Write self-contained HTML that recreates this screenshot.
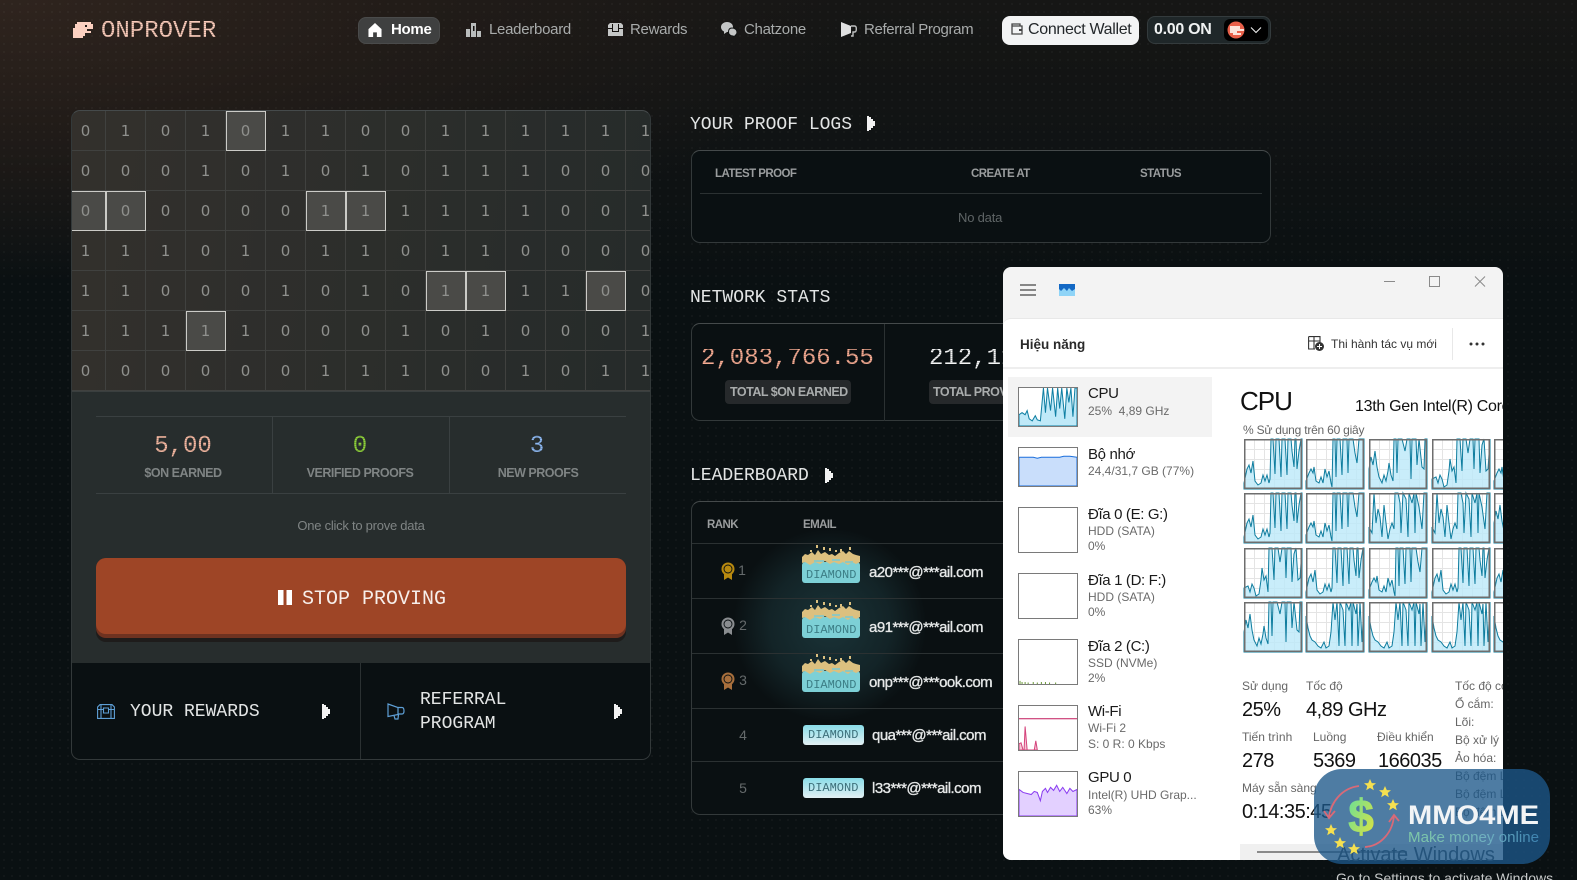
<!DOCTYPE html>
<html lang="vi"><head><meta charset="utf-8"><title>OnProver</title>
<style>
*{box-sizing:border-box}
html,body{margin:0;padding:0;width:1577px;height:880px;overflow:hidden;background:#0a1012}
body{position:relative;font-family:"Liberation Sans",sans-serif;color:#fff}
.bg{position:absolute;inset:0;background:radial-gradient(ellipse 850px 280px at 0 0,#2f241e 0,rgba(40,31,26,.7) 45%,rgba(10,16,18,0) 100%),linear-gradient(180deg,#161615 0,#0a1012 290px)}
.dots{position:absolute;inset:0;background-image:radial-gradient(circle,rgba(255,255,255,.04) .8px,transparent 1px);background-size:8px 8px}
.t{position:absolute;white-space:nowrap;line-height:20px;height:20px}
.m{font-family:"Liberation Mono",monospace}
.nav{font-size:15px;color:#a8abab;letter-spacing:-.28px}
.ic{position:absolute}
.panel{position:absolute;border:1px solid #33393a;border-top-color:#454a4b;border-radius:9px;background:#0a1012;overflow:hidden}
.h{font-weight:700;font-size:11.5px;color:#9a9d9e;letter-spacing:-.55px}
.grid{position:absolute;left:-6px;top:0;display:grid;grid-template-columns:repeat(15,40px);grid-auto-rows:40px;font-family:"DejaVu Sans",sans-serif;font-size:15px;color:#8f908d}
.grid i{font-style:normal;display:flex;align-items:center;justify-content:center;border-right:1.5px solid #40413f;border-bottom:1.5px solid #40413f}
.grid i.o{background:#4a4a47;outline:1.5px solid #cbcbc7;outline-offset:-1.5px}
.lbl{font-weight:700;font-size:12.5px;color:#7f8484;letter-spacing:-.48px;transform:translateX(-50%)}
.num{font-size:24px;line-height:24px;height:24px;transform:translateX(-50%)}
.dot{-webkit-text-fill-color:transparent;-webkit-background-clip:text;background-clip:text;background-size:2px 2px}
.mail{font-size:15px;letter-spacing:-.52px;color:#e6e8e8;-webkit-text-stroke:.35px #e6e8e8}
.rk{font-size:14px;color:#656a6b;transform:translateX(-50%)}
.ln{position:absolute;height:1px;background:#2b3132}
.win{position:absolute;left:1003px;top:267px;width:500px;height:593px;background:#f3f3f3;border-radius:8px 8px 0 8px;overflow:hidden;color:#111}
.in{position:absolute;left:-1003px;top:-267px;width:1577px;height:880px}
.wt{font-size:15px;color:#1a1a1a;letter-spacing:-.35px}
.ws{font-size:12px;color:#6a6a6a}
.th{position:absolute;border:1.5px solid #7a7a7a;background:#fff;width:60px;overflow:hidden}
.sl{font-size:12px;color:#666}
.sv{font-size:20px;color:#111;letter-spacing:-.5px}
.dg{font-size:12px;letter-spacing:0}
</style></head><body>
<div class="bg"></div><div class="dots"></div>

<!-- Logo -->
<svg class="ic" style="left:73px;top:22px" width="20" height="16" viewBox="0 0 20 16" shape-rendering="crispEdges"><path fill="#fbd0c0" d="M4 0H18V2H20V7H14V9H18V11H12V14H10V16H0V6H2V2H4Z"/><rect x="12" y="3" width="2" height="2" fill="#241c18"/></svg>
<div class="t m dot" style="left:101px;top:21px;font-size:24px;height:22px;line-height:22px;background-image:linear-gradient(#fbcdbc 70%,#a9877a 70%)">ONPROVER</div>

<!-- Nav -->
<div style="position:absolute;left:358px;top:17px;width:82px;height:27px;background:#3f4040;border:1px solid #4a4b4b;border-radius:8px"></div>
<svg class="ic" style="left:368px;top:23px" width="14" height="14" viewBox="0 0 14 15"><path fill="#fff" d="M7 0 14 6.5V15H9V10H5V15H0V6.5Z"/></svg>
<div class="t nav" style="left:391px;top:20px;color:#fff;font-weight:700">Home</div>
<svg class="ic" style="left:466px;top:22px" width="15" height="15" viewBox="0 0 15 15"><path fill="#b9bcbc" d="M5 1H10V15H5ZM0 7H4V15H0ZM11 9H15V15H11Z"/><rect x="7" y="4" width="1.5" height="5" fill="#14110f"/></svg>
<div class="t nav" style="left:489px;top:20px">Leaderboard</div>
<svg class="ic" style="left:608px;top:23px" width="15" height="13" viewBox="0 0 15 13"><path fill="#c4c6c6" d="M2 0H13L15 2V13H0V2Z"/><path fill="#14110f" d="M0 5H5V8H10V5H15V6H11V9H4V6H0ZM4 1H5V5H4ZM10 1H11V5H10Z"/></svg>
<div class="t nav" style="left:630px;top:20px">Rewards</div>
<svg class="ic" style="left:721px;top:22px" width="16" height="15" viewBox="0 0 16 15"><path fill="#c4c6c6" d="M6 0C9.500 0 12 2.200 12 5S9.500 10 6 10L3 12V9.500C1.200 8.600 0 7 0 5 0 2.200 2.700 0 6 0Z"/><path fill="#c4c6c6" stroke="#0f1212" d="M11 6C14 6 16 8 16 10S15 13 14 13.500V15L12 14C9.500 14 7.500 12.500 7.500 10S8.500 6 11 6Z"/></svg>
<div class="t nav" style="left:744px;top:20px">Chatzone</div>
<svg class="ic" style="left:841px;top:22px" width="16" height="15" viewBox="0 0 16 15"><path fill="#dfe0e0" d="M0 0 10 4V11L0 15Z"/><path fill="none" stroke="#bfc1c1" stroke-width="1.400" d="M10 4H13.500C15 4 15.300 5 15.300 7S15 10 13.500 10H12V14H10"/></svg>
<div class="t nav" style="left:864px;top:20px;letter-spacing:-.36px">Referral Program</div>
<div style="position:absolute;left:1002px;top:16px;width:137px;height:29px;background:#f2f3f4;border-radius:8px"></div>
<svg class="ic" style="left:1011px;top:23px" width="12" height="12" viewBox="0 0 12 12"><path fill="none" stroke="#444" stroke-width="1.300" d="M1 3H11V11H1ZM1 3V1H9V3"/><path fill="#444" d="M8 6H11V8H8Z"/></svg>
<div class="t" style="left:1028px;top:20px;font-size:16px;color:#23272a;letter-spacing:-.32px">Connect Wallet</div>
<div style="position:absolute;left:1147px;top:16px;width:124px;height:28px;background:#1f2729;border:1px solid #343b3d;border-radius:8px"></div>
<div class="t" style="left:1154px;top:20px;font-size:16px;color:#f0f2f2;font-weight:700;letter-spacing:-.3px">0.00 ON</div>
<div style="position:absolute;left:1224px;top:19px;width:44px;height:22px;background:#000;border-radius:6px"></div>
<svg class="ic" style="left:1227px;top:21px" width="18" height="18" viewBox="0 0 18 18"><circle cx="9" cy="9" r="8.500" fill="#e8604a"/><path fill="#fbe4dc" d="M3 5H13V8H17V10H10V12H14V14H6V12H3Z"/></svg>
<svg class="ic" style="left:1250px;top:26px" width="12" height="8" viewBox="0 0 12 8"><path fill="none" stroke="#eee" stroke-width="1.100" d="M1 1.500 6 6.500 11 1.500"/></svg>

<!-- Left panel -->
<div class="panel" style="left:71px;top:110px;width:580px;height:650px;background:linear-gradient(100deg,#33302c 0,#2a2d2b 60%,#242a2a 100%)">
 <div class="grid">
<i>0</i><i>1</i><i>0</i><i>1</i><i class="o">0</i><i>1</i><i>1</i><i>0</i><i>0</i><i>1</i><i>1</i><i>1</i><i>1</i><i>1</i><i>1</i>
<i>0</i><i>0</i><i>0</i><i>1</i><i>0</i><i>1</i><i>0</i><i>1</i><i>0</i><i>1</i><i>1</i><i>1</i><i>0</i><i>0</i><i>0</i>
<i class="o">0</i><i class="o">0</i><i>0</i><i>0</i><i>0</i><i>0</i><i class="o">1</i><i class="o">1</i><i>1</i><i>1</i><i>1</i><i>1</i><i>0</i><i>0</i><i>1</i>
<i>1</i><i>1</i><i>1</i><i>0</i><i>1</i><i>0</i><i>1</i><i>1</i><i>0</i><i>1</i><i>1</i><i>0</i><i>0</i><i>0</i><i>0</i>
<i>1</i><i>1</i><i>0</i><i>0</i><i>0</i><i>1</i><i>0</i><i>1</i><i>0</i><i class="o">1</i><i class="o">1</i><i>1</i><i>1</i><i class="o">0</i><i>0</i>
<i>1</i><i>1</i><i>1</i><i class="o">1</i><i>1</i><i>0</i><i>0</i><i>0</i><i>1</i><i>0</i><i>1</i><i>0</i><i>0</i><i>0</i><i>1</i>
<i>0</i><i>0</i><i>0</i><i>0</i><i>0</i><i>0</i><i>1</i><i>1</i><i>1</i><i>0</i><i>0</i><i>1</i><i>0</i><i>1</i><i>1</i>
 </div>
 <div style="position:absolute;left:0;top:280px;width:580px;height:272px;background:#272d2d;border-top:1px solid #3a3f3f"></div>
 <div style="position:absolute;left:0;top:552px;width:580px;height:98px;background:#0a1012"></div>
</div>
<div class="ln" style="left:96px;top:416px;width:530px;background:#3a4041"></div>
<div class="ln" style="left:96px;top:493px;width:530px;background:#3a4041"></div>
<div class="ln" style="left:272px;top:417px;width:1px;height:76px;background:#3a4041"></div>
<div class="ln" style="left:449px;top:417px;width:1px;height:76px;background:#3a4041"></div>
<div class="t m num dot" style="left:183px;top:435px;background-image:linear-gradient(#f4b8a2 70%,#a97f6f 70%)">5,00</div>
<div class="t m num dot" style="left:360px;top:435px;background-image:linear-gradient(#8fd13a 70%,#5f8a2d 70%)">0</div>
<div class="t m num dot" style="left:537px;top:435px;background-image:linear-gradient(#8fb9f2 70%,#5f80a8 70%)">3</div>
<div class="t lbl" style="left:183px;top:463px">$ON EARNED</div>
<div class="t lbl" style="left:360px;top:463px">VERIFIED PROOFS</div>
<div class="t lbl" style="left:538px;top:463px">NEW PROOFS</div>
<div class="t" style="left:361px;top:516px;transform:translateX(-50%);font-size:13px;color:#7f8484;letter-spacing:-.25px">One click to prove data</div>
<div style="position:absolute;left:96px;top:558px;width:530px;height:84px;background:#1e1c1b;border-radius:10px"></div>
<div style="position:absolute;left:96px;top:558px;width:530px;height:80px;background:#6e3220;border-radius:10px"></div>
<div style="position:absolute;left:96px;top:558px;width:530px;height:76px;background:#9e4526;border-radius:10px"></div>
<svg class="ic" style="left:278px;top:590px" width="14" height="15"><rect width="5.500" height="15" fill="#fff"/><rect x="8.500" width="5.500" height="15" fill="#fff"/></svg>
<div class="t m" style="left:302px;top:590px;font-size:20px;color:#f6eeea">STOP PROVING</div>
<div class="ln" style="left:360px;top:663px;width:1px;height:96px;background:#2b3132"></div>
<svg class="ic" style="left:97px;top:704px" width="18" height="15" viewBox="0 0 18 15"><path fill="none" stroke="#5e9fd6" stroke-width="1.100" d="M3 .600H15L17.400 3V14.400H.600V3ZM.600 5.500H6.500M11.500 5.500H17.400M4 .600V14.400M14 .600V14.400M6.500 4H11.500V9H6.500Z"/></svg>
<div class="t m" style="left:130px;top:702px;font-size:18px;color:#e3e5e5">YOUR REWARDS</div>
<svg class="ic" style="left:322px;top:704px" width="8" height="15"><path fill="#f2f2f2" d="M0 0H2V1H4V3H6V5H8V10H6V12H4V14H2V15H0Z"/></svg>
<svg class="ic" style="left:387px;top:703px" width="18" height="17" viewBox="0 0 18 17"><path fill="none" stroke="#5e9fd6" stroke-width="1.200" d="M1 1 11 4.500V11.500L1 13.500ZM11 4.500H15C16.500 4.500 17 6 17 8S16.500 11 15 11H11M7 12.500 8 16H11L11.500 11.500"/></svg>
<div class="t m" style="left:420px;top:690px;font-size:18px;color:#e3e5e5">REFERRAL</div>
<div class="t m" style="left:420px;top:714px;font-size:18px;color:#e3e5e5">PROGRAM</div>
<svg class="ic" style="left:614px;top:704px" width="8" height="15"><path fill="#f2f2f2" d="M0 0H2V1H4V3H6V5H8V10H6V12H4V14H2V15H0Z"/></svg>

<!-- Proof logs -->
<div class="t m" style="left:690px;top:115px;font-size:18px;color:#e3e5e5">YOUR PROOF LOGS</div>
<svg class="ic" style="left:867px;top:116px" width="8" height="15"><path fill="#f2f2f2" d="M0 0H2V1H4V3H6V5H8V10H6V12H4V14H2V15H0Z"/></svg>
<div class="panel" style="left:691px;top:150px;width:580px;height:93px"></div>
<div class="t h" style="left:715px;top:164px">LATEST PROOF</div>
<div class="t h" style="left:971px;top:164px">CREATE AT</div>
<div class="t h" style="left:1140px;top:164px">STATUS</div>
<div class="ln" style="left:700px;top:193px;width:562px"></div>
<div class="t" style="left:958px;top:208px;font-size:13px;color:#5f6566;letter-spacing:-.2px">No data</div>

<!-- Network -->
<div class="t m" style="left:690px;top:288px;font-size:18px;color:#e3e5e5">NETWORK STATS</div>
<div class="panel" style="left:691px;top:323px;width:580px;height:98px"></div>
<div class="ln" style="left:884px;top:324px;width:1px;height:97px"></div>
<div class="t m dot" style="left:701px;top:349px;font-size:24px;background-image:linear-gradient(#f6ab92 70%,#a37565 70%)">2,083,766.55</div>
<div style="position:absolute;left:725px;top:380px;width:126px;height:24px;background:#26292b;border-radius:4px"></div>
<div class="t" style="left:730px;top:382px;font-size:12.5px;font-weight:700;color:#a9acac;letter-spacing:-.5px">TOTAL $ON EARNED</div>
<div class="t m dot" style="left:929px;top:349px;font-size:24px;background-image:linear-gradient(#f4f5f5 70%,#a0a3a3 70%)">212,111</div>
<div style="position:absolute;left:929px;top:380px;width:140px;height:24px;background:#26292b;border-radius:4px"></div>
<div class="t" style="left:933px;top:382px;font-size:12.5px;font-weight:700;color:#a9acac;letter-spacing:-.5px">TOTAL PROV</div>

<!-- Leaderboard -->
<div class="t m" style="left:690px;top:466px;font-size:18px;color:#e3e5e5">LEADERBOARD</div>
<svg class="ic" style="left:825px;top:468px" width="8" height="15"><path fill="#f2f2f2" d="M0 0H2V1H4V3H6V5H8V10H6V12H4V14H2V15H0Z"/></svg>
<div class="panel" style="left:691px;top:501px;width:580px;height:314px"></div>
<div style="position:absolute;left:735px;top:530px;width:190px;height:190px;background:radial-gradient(ellipse at center,rgba(60,125,135,.32) 0,rgba(60,125,135,.18) 45%,rgba(60,125,135,0) 72%)"></div>
<div class="t h" style="left:707px;top:515px">RANK</div>
<div class="t h" style="left:803px;top:515px">EMAIL</div>
<div class="ln" style="left:692px;top:543px;width:578px"></div>
<div class="ln" style="left:692px;top:598px;width:578px"></div>
<div class="ln" style="left:692px;top:653px;width:578px"></div>
<div class="ln" style="left:692px;top:708px;width:578px"></div>
<div class="ln" style="left:692px;top:761px;width:578px"></div>

<svg width="0" height="0" style="position:absolute"><defs>
<g id="flame"><rect y="17" width="58" height="21" rx="3" fill="#7dd0d6"/><path fill="#dcc07f" d="M0 12 3 9 6 10 10 7 13 10 16 5 19 9 23 7 27 10 30 9 33 11 37 8 41 6 44 9 47 6 51 9 54 10 58 11V17L54 19 50 17 46 20 41 17 37 19 32 17 28 19 23 16 18 19 13 17 8 20 3 17 0 18Z"/><path fill="#dcc07f" d="M14 0h2v3h-2zM21 2h2v3h-2zM27 3h2v3h-2zM38 4h2v3h-2zM47 2h2v3h-2zM8 5h2v2H8zM33 5h2v2h-2z"/><path fill="#8fc7c0" d="M12 15h10v2H12zM30 14h8v2h-8zM43 16h8v2h-8z"/></g>
<g id="medal"><path d="M3 11V18L7 15.500 11 18V11Z"/><circle cx="7" cy="7" r="6.500"/><circle cx="7" cy="7" r="4" fill="none" stroke="#0a1012" stroke-width=".9"/></g>
</defs></svg>

<svg class="ic" style="left:721px;top:562px" width="14" height="18" fill="#b8890f"><use href="#medal"/></svg>
<svg class="ic" style="left:721px;top:617px" width="14" height="18" fill="#8a8d90"><use href="#medal"/></svg>
<svg class="ic" style="left:721px;top:672px" width="14" height="18" fill="#a86f3c"><use href="#medal"/></svg>
<div class="t rk" style="left:742px;top:560px">1</div>
<div class="t rk" style="left:743px;top:615px">2</div>
<div class="t rk" style="left:743px;top:670px">3</div>
<div class="t rk" style="left:743px;top:725px">4</div>
<div class="t rk" style="left:743px;top:778px">5</div>

<svg class="ic" style="left:802px;top:545px" width="58" height="38"><use href="#flame"/></svg>
<svg class="ic" style="left:802px;top:600px" width="58" height="38"><use href="#flame"/></svg>
<svg class="ic" style="left:802px;top:654px" width="58" height="38"><use href="#flame"/></svg>
<div class="t m dg" style="left:806px;top:565px;color:#3c7d85">DIAMOND</div>
<div class="t m dg" style="left:806px;top:620px;color:#3c7d85">DIAMOND</div>
<div class="t m dg" style="left:806px;top:675px;color:#3c7d85">DIAMOND</div>
<div class="t mail" style="left:869px;top:563px">a20***@***ail.com</div>
<div class="t mail" style="left:869px;top:618px">a91***@***ail.com</div>
<div class="t mail" style="left:869px;top:673px">onp***@***ook.com</div>

<div style="position:absolute;left:803px;top:725px;width:61px;height:20px;border-radius:3px;background:linear-gradient(180deg,#8adde8,#e2eff3)"></div>
<div class="t m dg" style="left:808px;top:725px;color:#3d6f7a">DIAMOND</div>
<div class="t mail" style="left:872px;top:726px">qua***@***ail.com</div>
<div style="position:absolute;left:803px;top:778px;width:61px;height:20px;border-radius:3px;background:linear-gradient(180deg,#8adde8,#e2eff3)"></div>
<div class="t m dg" style="left:808px;top:778px;color:#3d6f7a">DIAMOND</div>
<div class="t mail" style="left:872px;top:779px">l33***@***ail.com</div>

<!-- Task manager -->
<div class="win"><div class="in">
 <svg class="ic" style="left:1020px;top:284px" width="16" height="12"><path stroke="#444" stroke-width="1.200" d="M0 1H16M0 6H16M0 11H16"/></svg>
 <svg class="ic" style="left:1059px;top:284px" width="16" height="12"><rect width="16" height="12" fill="#8fd4f7"/><path fill="#1368c4" d="M0 0H16V5L13 7 10 4 8 7 5 4 2 7 0 5Z"/></svg>
 <svg class="ic" style="left:1384px;top:276px" width="102" height="12"><path stroke="#8a8a8a" fill="none" d="M0 5.500H11M45.500 .500H55.500V10.500H45.500ZM91 .500 101 10.500M101 .500 91 10.500"/></svg>
 <div style="position:absolute;left:1003px;top:318px;width:500px;height:542px;background:#fff;border-radius:8px 0 0 8px;border-top:1px solid #e8e8e8"></div>
 <div style="position:absolute;left:1003px;top:367px;width:500px;height:2px;background:#eeeeee"></div>
 <div class="t" style="left:1020px;top:335px;font-size:13.500px;font-weight:700;color:#2a2a2a">Hiệu năng</div>
 <svg class="ic" style="left:1308px;top:336px" width="16" height="15" viewBox="0 0 16 15"><path fill="none" stroke="#333" stroke-width="1.100" d="M.600.600H12V7M.600.600V13H7M.600 5H12M6 .600V13"/><circle cx="11.500" cy="10.500" r="4.500" fill="#333"/><path stroke="#fff" stroke-width="1" d="M9 10.500H14M11.500 8V13"/></svg>
 <div class="t" style="left:1331px;top:334px;font-size:12px;color:#333">Thi hành tác vụ mới</div>
 <div style="position:absolute;left:1452px;top:328px;width:1px;height:32px;background:#e8e8e8"></div>
 <svg class="ic" style="left:1469px;top:342px" width="16" height="4" fill="#333"><circle cx="2" cy="2" r="1.500"/><circle cx="8" cy="2" r="1.500"/><circle cx="14" cy="2" r="1.500"/></svg>

 <div style="position:absolute;left:1008px;top:377px;width:204px;height:60px;background:#f3f3f3"></div>
 <svg class="th" style="left:1018px;top:387px;height:40px" viewBox="0 0 57 37" preserveAspectRatio="none"><path fill="#bfe9f8" stroke="#0f7fa3" d="M0 37V26L3 24 6 26 8 22 10 30 13 32 16 27 18 31 21 32 24 0 26 24 28 0 31 22 33 0 36 28 38 0 40 20 42 0 45 30 47 0 49 14 51 0 53 28 55 0 57 0V37Z"/></svg>
 <div class="t wt" style="left:1088px;top:384px">CPU</div>
 <div class="t ws" style="left:1088px;top:401px">25%&nbsp; 4,89 GHz</div>

 <svg class="th" style="left:1018px;top:447px;height:40px" viewBox="0 0 57 37" preserveAspectRatio="none"><path fill="#c9defb" stroke="#1a6fdc" d="M0 37V9L10 9 14 9 18 10 22 9 40 9 44 8 50 8 57 9V37Z"/></svg>
 <div class="t wt" style="left:1088px;top:445px">Bộ nhớ</div>
 <div class="t ws" style="left:1088px;top:461px">24,4/31,7 GB (77%)</div>

 <div class="th" style="left:1018px;top:507px;height:46px"></div>
 <div class="t wt" style="left:1088px;top:505px">Đĩa 0 (E: G:)</div>
 <div class="t ws" style="left:1088px;top:521px">HDD (SATA)</div>
 <div class="t ws" style="left:1088px;top:536px">0%</div>

 <div class="th" style="left:1018px;top:573px;height:46px"></div>
 <div class="t wt" style="left:1088px;top:571px">Đĩa 1 (D: F:)</div>
 <div class="t ws" style="left:1088px;top:587px">HDD (SATA)</div>
 <div class="t ws" style="left:1088px;top:602px">0%</div>

 <svg class="th" style="left:1018px;top:639px;height:46px" viewBox="0 0 57 43" preserveAspectRatio="none"><path stroke="#6d9a3a" fill="none" d="M1 43V40M3 43V41M6 43V41M9 43V41.500M14 43V41M18 43V41.500M22 43V41M26 43V41M30 43V41.500M36 43V41.500"/></svg>
 <div class="t wt" style="left:1088px;top:637px">Đĩa 2 (C:)</div>
 <div class="t ws" style="left:1088px;top:653px">SSD (NVMe)</div>
 <div class="t ws" style="left:1088px;top:668px">2%</div>

 <svg class="th" style="left:1018px;top:705px;height:46px" viewBox="0 0 57 43" preserveAspectRatio="none"><path stroke="#c2185b" fill="none" d="M0 12.500H57"/><path fill="#f5c6d6" stroke="#d5447c" d="M0 43V37L2 36 4 43 5 43 6 20 8 43 15 43 16.500 34 18 43Z"/></svg>
 <div class="t wt" style="left:1088px;top:702px">Wi-Fi</div>
 <div class="t ws" style="left:1088px;top:718px">Wi-Fi 2</div>
 <div class="t ws" style="left:1088px;top:734px">S: 0 R: 0 Kbps</div>

 <svg class="th" style="left:1018px;top:771px;height:46px" viewBox="0 0 57 43" preserveAspectRatio="none"><path fill="#e3d0ff" stroke="#8a3df0" d="M0 43V17L4 20 8 21 12 22 15 19 18 20 21 28 23 19 26 16 28 20 31 15 34 18 37 13 40 19 43 15 47 21 50 16 53 19 57 17V43Z"/></svg>
 <div class="t wt" style="left:1088px;top:768px">GPU 0</div>
 <div class="t ws" style="left:1088px;top:785px">Intel(R) UHD Grap...</div>
 <div class="t ws" style="left:1088px;top:800px">63%</div>

 <div class="t" style="left:1240px;top:386px;font-size:26px;letter-spacing:-1px;height:30px;line-height:30px;color:#111">CPU</div>
 <div class="t" style="left:1355px;top:397px;font-size:16px;color:#111;letter-spacing:-.3px">13th Gen Intel(R) Core</div>
 <div class="t sl" style="left:1243px;top:420px;letter-spacing:-.22px">% Sử dụng trên 60 giây</div>

 <svg class="ic" style="left:1240px;top:435px" width="263" height="222">
  <defs>
   <g id="gr"><rect width="58" height="50" fill="#fff"/><path stroke="#e4e4e4" fill="none" d="M10.500 0V50M20.500 0V50M30.500 0V50M40.500 0V50M50.500 0V50M0 10.500H58M0 20.500H58M0 30.500H58M0 40.500H58"/></g>
   <g id="a"><use href="#gr"/><path fill="#bde9f9" fill-opacity=".82" stroke="#0d7c9e" stroke-width="1" d="M0 50V44L3 30 5 26 7 34 9 22 11 42 14 46 17 44 19 36 21 42 23 36 25 44 26 40 27 0 29 0 31 35 32 0 35 0 37 38 38 0 41 0 43 36 44 0 47 0 48 12 50 28 51 0 52 0 53 30 55 12 57 0 58 0V50Z"/><rect x=".75" y=".75" width="56.500" height="48.500" fill="none" stroke="#6e6e6e" stroke-width="1.500"/></g>
   <g id="b"><use href="#gr"/><path fill="#bde9f9" fill-opacity=".82" stroke="#0d7c9e" stroke-width="1" d="M0 50V42L3 34 5 30 7 34 8 28 10 42 13 44 15 38 17 44 19 30 21 38 23 32 25 44 26 48 27 0 29 0 30 38 31 0 34 0 36 36 37 0 41 0 42 34 43 0 47 0 49 14 51 24 53 0 58 0V50Z"/><rect x=".75" y=".75" width="56.500" height="48.500" fill="none" stroke="#6e6e6e" stroke-width="1.500"/></g>
   <g id="c"><use href="#gr"/><path fill="#bde9f9" fill-opacity=".82" stroke="#0d7c9e" stroke-width="1" d="M0 50V30L2 18 4 26 6 12 8 28 10 38 13 44 15 36 17 42 19 32 20 24 22 36 24 42 25 0 27 0 28 34 29 0 33 0 36 12 38 0 41 0 42 40 43 0 47 0 48 26 50 0 53 28 55 30 56 0 58 0V50Z"/><rect x=".75" y=".75" width="56.500" height="48.500" fill="none" stroke="#6e6e6e" stroke-width="1.500"/></g>
   <g id="d"><use href="#gr"/><path fill="#bde9f9" fill-opacity=".82" stroke="#0d7c9e" stroke-width="1" d="M0 50V40L4 38 6 44 8 36 10 40 12 48 15 46 17 32 18 20 20 32 22 28 24 44 25 0 28 0 30 32 31 0 34 0 36 14 38 0 41 0 42 30 43 0 47 0 48 34 50 6 52 0 54 32 56 30 58 0V50Z"/><rect x=".75" y=".75" width="56.500" height="48.500" fill="none" stroke="#6e6e6e" stroke-width="1.500"/></g>
   <g id="e"><use href="#gr"/><path fill="#bde9f9" fill-opacity=".82" stroke="#0d7c9e" stroke-width="1" d="M0 50V34L3 40 5 0 7 30 9 16 11 24 13 44 15 12 17 30 19 46 21 36 23 30 25 36 26 0 29 0 31 10 32 40 34 0 37 6 39 44 40 0 43 10 45 0 46 40 47 0 50 14 53 36 55 0 58 0V50Z"/><rect x=".75" y=".75" width="56.500" height="48.500" fill="none" stroke="#6e6e6e" stroke-width="1.500"/></g>
   <g id="f"><use href="#gr"/><path fill="#bde9f9" fill-opacity=".82" stroke="#0d7c9e" stroke-width="1" d="M0 50V14L2 26 4 34 6 38 9 40 12 44 15 46 18 40 20 46 23 44 25 30 27 0 29 18 31 0 33 44 34 0 37 8 39 44 40 0 43 8 45 0 46 44 47 0 50 12 51 2 52 44 54 0 56 40 58 0V50Z"/><rect x=".75" y=".75" width="56.500" height="48.500" fill="none" stroke="#6e6e6e" stroke-width="1.500"/></g>
  </defs>
  <use href="#a" x="4" y="4"/><use href="#b" x="66" y="4"/><use href="#c" x="129" y="4"/><use href="#d" x="192" y="4"/><use href="#b" x="254" y="4"/>
  <use href="#a" x="4" y="58"/><use href="#b" x="66" y="58"/><use href="#e" x="129" y="58"/><use href="#e" x="192" y="58"/><use href="#c" x="254" y="58"/>
  <use href="#d" x="4" y="113"/><use href="#a" x="66" y="113"/><use href="#b" x="129" y="113"/><use href="#a" x="192" y="113"/><use href="#a" x="254" y="113"/>
  <use href="#c" x="4" y="167"/><use href="#f" x="66" y="167"/><use href="#f" x="129" y="167"/><use href="#f" x="192" y="167"/><use href="#f" x="254" y="167"/>
 </svg>

 <div class="t sl" style="left:1242px;top:676px">Sử dụng</div>
 <div class="t sl" style="left:1306px;top:676px">Tốc độ</div>
 <div class="t sv" style="left:1242px;top:700px">25%</div>
 <div class="t sv" style="left:1306px;top:700px">4,89 GHz</div>
 <div class="t sl" style="left:1242px;top:727px">Tiến trình</div>
 <div class="t sl" style="left:1313px;top:727px">Luồng</div>
 <div class="t sl" style="left:1377px;top:727px">Điều khiển</div>
 <div class="t sv" style="left:1242px;top:751px">278</div>
 <div class="t sv" style="left:1313px;top:751px">5369</div>
 <div class="t sv" style="left:1378px;top:751px">166035</div>
 <div class="t sl" style="left:1242px;top:778px">Máy sẵn sàng</div>
 <div class="t sv" style="left:1242px;top:802px">0:14:35:45</div>
 <div class="t sl" style="left:1455px;top:676px">Tốc độ cơ</div>
 <div class="t sl" style="left:1455px;top:694px">Ổ cắm:</div>
 <div class="t sl" style="left:1455px;top:712px">Lõi:</div>
 <div class="t sl" style="left:1455px;top:730px">Bộ xử lý lô</div>
 <div class="t sl" style="left:1455px;top:748px">Ảo hóa:</div>
 <div class="t sl" style="left:1455px;top:766px">Bộ đệm L1</div>
 <div class="t sl" style="left:1455px;top:784px">Bộ đệm L2</div>
 <div class="t sl" style="left:1455px;top:802px">Bộ đệm L3</div>
 <div style="position:absolute;left:1240px;top:844px;width:263px;height:16px;background:#f0f0f0"></div>
 <div style="position:absolute;left:1257px;top:851px;width:150px;height:2px;background:#8a8a8a"></div>
</div></div>

<!-- Activate Windows -->
<div class="t" style="left:1337px;top:845px;font-size:20px;color:#3f474a">Activate Windows</div>
<div class="t" style="left:1336px;top:868px;font-size:14px;color:#c6c8c8">Go to Settings to activate Windows.</div>

<!-- Watermark -->
<div style="position:absolute;left:1314px;top:769px;width:236px;height:95px;border-radius:28px;background:rgba(28,87,137,.78)"></div>
<svg class="ic" style="left:1314px;top:769px" width="236" height="95" viewBox="1314 769 236 95">
 <defs><linearGradient id="dg" x1="0" y1="0" x2="1" y2="1"><stop offset="0" stop-color="#5fe0a0"/><stop offset="1" stop-color="#e4e23a"/></linearGradient>
 <linearGradient id="mg" x1="0" y1="0" x2="1" y2="0"><stop offset="0" stop-color="#7fc9a6"/><stop offset=".6" stop-color="#6fb0c0"/><stop offset="1" stop-color="#3d82b0"/></linearGradient>
 <path id="st" d="M0-6 1.800-1.900 6-1.700 2.700 1 3.800 5.300 0 2.900-3.800 5.300-2.700 1-6-1.700-1.800-1.900Z" fill="#f5e050"/></defs>
 <use href="#st" x="1370" y="785"/><use href="#st" x="1385" y="792"/><use href="#st" x="1393" y="805"/><use href="#st" x="1331" y="830"/><use href="#st" x="1340" y="843"/><use href="#st" x="1354" y="849"/>
 <path fill="none" stroke="#d86a78" stroke-width="1.800" d="M1359 786C1342 788 1331 802 1329 817M1324 811 1329 818 1335 811"/>
 <path fill="none" stroke="#d86a78" stroke-width="1.800" d="M1365 847C1381 846 1393 832 1394 815M1389 822 1394 815 1399 821"/>
 <text x="1361" y="832" text-anchor="middle" font-family="Liberation Sans,sans-serif" font-weight="700" font-size="46" fill="url(#dg)" stroke="url(#dg)" stroke-width=".8">$</text>
 <text x="1408" y="824" font-family="Liberation Sans,sans-serif" font-weight="700" font-size="27" fill="#f2f4f6" textLength="131" lengthAdjust="spacingAndGlyphs">MMO4ME</text>
 <text x="1408" y="842" font-family="Liberation Sans,sans-serif" font-size="15" fill="url(#mg)" textLength="131" lengthAdjust="spacingAndGlyphs">Make money online</text>
</svg>
</body></html>
